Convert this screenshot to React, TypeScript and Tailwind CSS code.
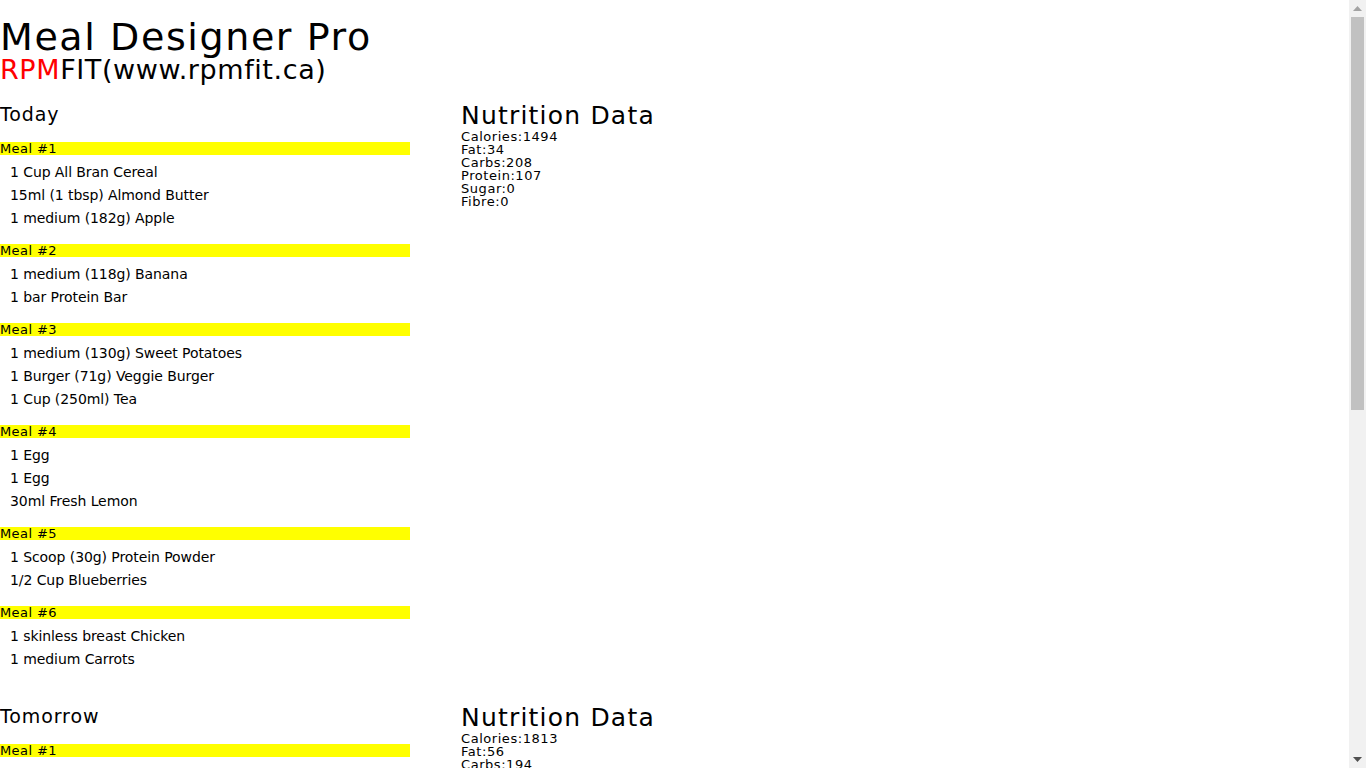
type Meal = { items: string[] };

type Day = {
  title: string;
  meals: Meal[];
  nutrition: { label: string; value: number }[];
};

const days: Day[] = [
  {
    title: "Today",
    meals: [
      { items: ["1 Cup All Bran Cereal", "15ml (1 tbsp) Almond Butter", "1 medium (182g) Apple"] },
      { items: ["1 medium (118g) Banana", "1 bar Protein Bar"] },
      { items: ["1 medium (130g) Sweet Potatoes", "1 Burger (71g) Veggie Burger", "1 Cup (250ml) Tea"] },
      { items: ["1 Egg", "1 Egg", "30ml Fresh Lemon"] },
      { items: ["1 Scoop (30g) Protein Powder", "1/2 Cup Blueberries"] },
      { items: ["1 skinless breast Chicken", "1 medium Carrots"] },
    ],
    nutrition: [
      { label: "Calories", value: 1494 },
      { label: "Fat", value: 34 },
      { label: "Carbs", value: 208 },
      { label: "Protein", value: 107 },
      { label: "Sugar", value: 0 },
      { label: "Fibre", value: 0 },
    ],
  },
  {
    title: "Tomorrow",
    meals: [
      { items: ["1 Cup Oatmeal", "15ml (1 tbsp) Peanut Butter", "1 medium (118g) Banana", "1 Cup (250ml) Coffee"] },
      { items: ["1 Scoop (30g) Protein Powder", "1 Cup Strawberries", "1 cup Greek Yogurt"] },
      { items: ["1 skinless breast Chicken", "1 Cup Brown Rice", "1 Cup Broccoli", "1 Cup (250ml) Tea"] },
      { items: ["1 Egg", "1 Egg", "1 slice Whole Wheat Bread"] },
      { items: ["1 fillet (150g) Salmon", "1 medium (130g) Sweet Potatoes", "1 Cup Spinach", "30ml Fresh Lemon"] },
      { items: ["1 bar Protein Bar", "1 medium (182g) Apple", "1/4 Cup Almonds"] },
    ],
    nutrition: [
      { label: "Calories", value: 1813 },
      { label: "Fat", value: 56 },
      { label: "Carbs", value: 194 },
      { label: "Protein", value: 131 },
      { label: "Sugar", value: 0 },
      { label: "Fibre", value: 0 },
    ],
  },
];

const DaySection = ({ day }: { day: Day }) => (
  <div className="mt-[19px] flex items-start">
    <div className="w-[410px]">
      <h2 className="mb-[16px] text-[19px] leading-[24px] tracking-[0.9px]">{day.title}</h2>
      {day.meals.map((meal, i) => (
        <div key={i} className="pb-[14px]">
          <div className="bg-[#ffff00] text-[13px] leading-[13px] tracking-[0.4px]">Meal #{i + 1}</div>
          <ul className="pt-[6px]">
            {meal.items.map((item, j) => (
              <li key={j} className="pl-[10px] text-[14px] leading-[23px] tracking-[-0.08px]">
                {item}
              </li>
            ))}
          </ul>
        </div>
      ))}
    </div>
    <div className="ml-[51px]">
      <h3 className="text-[25px] leading-[28px] tracking-[1.2px]">Nutrition Data</h3>
      {day.nutrition.map((n) => (
        <div key={n.label} className="text-[13px] leading-[13px] tracking-[0.55px]">
          {n.label}:{n.value}
        </div>
      ))}
    </div>
  </div>
);

// page scrollbar, drawn since the screenshot hides the native one
const Scrollbar = () => (
  <div className="fixed right-0 top-0 flex h-screen w-[17px] flex-col items-center bg-[#f1f1f1]">
    <div className="flex h-[17px] w-full items-center justify-center">
      <svg width="9" height="5" viewBox="0 0 9 5">
        <path d="M0 5 L4.5 0 L9 5 Z" fill="#a3a3a3" />
      </svg>
    </div>
    <div className="h-[393px] w-[13px] bg-[#c1c1c1]" />
    <div className="flex-1" />
    <div className="flex h-[17px] w-full items-center justify-center">
      <svg width="9" height="5" viewBox="0 0 9 5">
        <path d="M0 0 L9 0 L4.5 5 Z" fill="#505050" />
      </svg>
    </div>
  </div>
);

export default function App() {
  return (
    <div className="bg-white pr-[17px] text-black" style={{ fontFamily: '"DejaVu Sans", Verdana, sans-serif' }}>
      <h1 className="pt-[18px] text-[38px] leading-[38px] tracking-[1.6px]">Meal Designer Pro</h1>
      <div className="text-[27px] leading-[27px] tracking-[0.6px]">
        <span className="text-[#ff0000]">RPM</span>FIT(www.rpmfit.ca)
      </div>
      {days.map((day) => (
        <DaySection key={day.title} day={day} />
      ))}
      <Scrollbar />
    </div>
  );
}
